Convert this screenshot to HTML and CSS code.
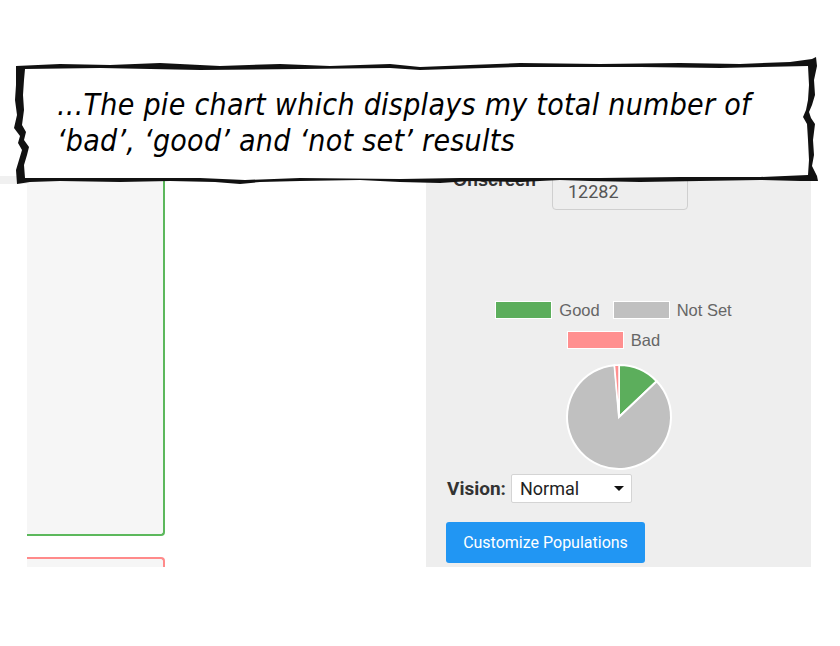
FILE: index.html
```html
<!DOCTYPE html>
<html lang="en">
<head>
  <meta charset="UTF-8" />
  <title>Pie chart results</title>
  <link rel="stylesheet" href="styles.css">
</head>
<body>
  <div class="stage">

    <!-- Screenshot of the app -->
    <div class="shot">
      <div class="gutter"></div>

      <div class="left-col">
        <div class="panel panel-good"></div>
        <div class="panel panel-bad"></div>
      </div>

      <div class="middle"></div>

      <div class="side">
        <div class="field-row">
          <label class="field-label">Onscreen</label>
          <div class="field-input">12282</div>
        </div>

        <div class="legend">
          <div class="legend-item"><span class="swatch swatch-good"></span>Good</div>
          <div class="legend-item"><span class="swatch swatch-unset"></span>Not Set</div>
          <div class="legend-item"><span class="swatch swatch-bad"></span>Bad</div>
        </div>

        <svg class="pie" width="110" height="110" viewBox="-55 -55 110 110">
          <path d="M0,0 L0,-52 A52,52 0 0 1 37.72,-35.79 Z" fill="#5cae5c" stroke="#fff" stroke-width="2"/>
          <path d="M0,0 L37.72,-35.79 A52,52 0 1 1 -4.53,-51.8 Z" fill="#c0c0c0" stroke="#fff" stroke-width="2"/>
          <path d="M0,0 L-4.53,-51.8 A52,52 0 0 1 0,-52 Z" fill="#ff8f8f" stroke="#fff" stroke-width="1.5"/>
        </svg>

        <div class="vision-row">
          <span class="vision-label">Vision:</span>
          <div class="select">
            <span>Normal</span>
            <span class="caret"></span>
          </div>
        </div>

        <button class="btn-primary">Customize Populations</button>
      </div>
    </div>

    <!-- Caption banner over the screenshot -->
    <div class="banner">
      <svg class="banner-edge" width="806" height="130" viewBox="14 56 806 130">
        <path fill="#111" d="
          M16,66 L60,64 L110,65 L160,63 L220,66 L280,64 L330,66 L390,64 L420,67 L470,65 L520,63 L600,64 L680,63 L740,64 L790,62 L812,59 L816,57
          L817,66 L814,80 L815,95 L812,105 L809,112 L811,118 L815,124 L813,140 L814,155 L812,166 L817,176 L818,181
          L800,181 L760,180 L700,181 L640,182 L590,181 L560,180 L520,182 L470,181 L440,183 L400,182 L360,180 L300,181 L260,182 L240,184 L215,182 L170,181 L120,182 L60,181 L30,182 L17,184
          L16,170 L19,160 L22,150 L18,143 L20,136 L14,128 L17,115 L15,100 L16,85 Z"/>
        <path fill="#fff" d="
          M25,69 L100,68 L200,70 L300,69 L390,68 L420,70 L520,67 L640,67 L720,68 L808,66
          L809,85 L808,100 L806,110 L803,117 L807,124 L808,140 L809,160 L808,175
          L760,177 L680,177 L600,178 L520,178 L460,178 L400,179 L300,178 L245,180 L200,178 L120,178 L60,178 L25,178
          L24,165 L27,155 L29,147 L24,140 L26,132 L22,125 L24,110 L23,95 L24,80 Z"/>
      </svg>
      <p class="banner-text">...The pie chart which displays my total number of<br>‘bad’, ‘good’ and ‘not set’ results</p>
    </div>

  </div>
</body>
</html>
```

FILE: styles.css
```css
*, *::before, *::after {
  box-sizing: border-box;
}

body {
  margin: 0;
  background: #fff;
  font-family: Roboto, 'Liberation Sans', sans-serif;
}

.stage {
  position: relative;
  width: 840px;
  height: 646px;
  overflow: hidden;
}

/* Screenshot */
.shot {
  margin-top: 176px;
  height: 391px;
  overflow: hidden;
  display: grid;
  grid-template-columns: 27px 138px 261px 385px 29px;
}

.gutter {
  border-top: 8px solid #f0f0f0;
}

.left-col {
  display: flex;
  flex-direction: column;
}

.panel {
  background: #f6f6f6;
}

.panel-good {
  height: 360px;
  border-right: 2px solid #5cb85c;
  border-bottom: 2px solid #5cb85c;
  border-bottom-right-radius: 4px;
}

.panel-bad {
  margin-top: 21px;
  flex: 1;
  border-top: 2px solid #ff8a8a;
  border-right: 2px solid #ff8a8a;
  border-top-right-radius: 4px;
}

.side {
  background: #eeeeee;
  display: flex;
  flex-direction: column;
  align-items: flex-start;
}

.field-row {
  display: flex;
  margin-top: -8px;
  padding-left: 27px;
}

.field-label {
  width: 99px;
  padding-top: 2px;
  font-family: 'Liberation Sans', Arial, sans-serif;
  font-weight: bold;
  font-size: 18px;
  color: #333;
}

.field-input {
  width: 136px;
  height: 42px;
  padding: 12px 15px;
  border: 1px solid #cfcfcf;
  border-radius: 4px;
  font-size: 18px;
  color: #555;
}

/* Chart */
.legend {
  width: 238px;
  margin: 92px 0 0 69px;
  display: flex;
  flex-wrap: wrap;
  justify-content: center;
  column-gap: 14px;
  row-gap: 14px;
}

.legend-item {
  display: flex;
  align-items: center;
  gap: 8px;
  height: 16px;
  font-family: 'Liberation Sans', Arial, sans-serif;
  font-size: 16.5px;
  color: #666;
}

.swatch {
  width: 55px;
  height: 16px;
  box-shadow: 0 0 0 1px #fff;
}

.swatch-good { background: #5cae5c; }
.swatch-unset { background: #c0c0c0; }
.swatch-bad { background: #ff8f8f; }

.pie {
  display: block;
  margin: 14px 0 0 138px;
}

.vision-row {
  display: flex;
  align-items: center;
  gap: 5px;
  margin: 2px 0 0 21px;
}

.vision-label {
  font-weight: bold;
  font-size: 19px;
  color: #333;
}

.select {
  width: 121px;
  height: 29px;
  display: flex;
  align-items: center;
  justify-content: space-between;
  padding: 0 7px 0 8px;
  background: #fff;
  border: 1px solid #d4d4d4;
  border-radius: 2px;
  font-size: 18px;
  color: #222;
}

.caret {
  width: 0;
  height: 0;
  border-left: 5px solid transparent;
  border-right: 5px solid transparent;
  border-top: 5px solid #111;
}

.btn-primary {
  margin: 19px 0 0 20px;
  width: 199px;
  height: 41px;
  border: 0;
  border-radius: 3px;
  background: #2196f3;
  color: #fff;
  font-family: Roboto, sans-serif;
  font-size: 16px;
}

/* Caption banner */
.banner {
  position: absolute;
  left: 14px;
  top: 56px;
  width: 806px;
  height: 130px;
}

.banner-edge {
  position: absolute;
  left: 0;
  top: 0;
}

.banner-text {
  position: relative;
  margin: 0;
  padding: 31px 0 0 43px;
  font-family: 'DejaVu Sans Condensed', 'DejaVu Sans', sans-serif;
  font-style: italic;
  font-size: 30px;
  line-height: 36px;
  letter-spacing: 0.28px;
  color: #000;
}
```
